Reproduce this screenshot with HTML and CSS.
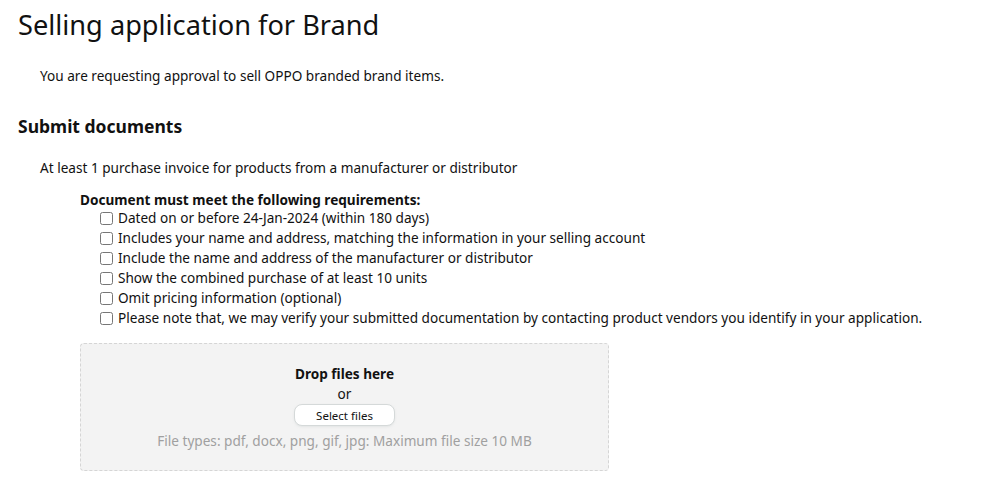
FILE: index.html
```html
<!DOCTYPE html>
<html lang="en">
<head>
    <meta charset="UTF-8">
    <meta name="viewport" content="width=device-width, initial-scale=1.0">
    <title>Selling application for Brand</title>
    <link rel="stylesheet" href="styles.css">
</head>
<body>
    <h1>Selling application for Brand</h1>

    <p class="intro">You are requesting approval to sell OPPO branded brand items.</p>

    <h2>Submit documents</h2>

    <div class="doc-section">
        <p class="doc-title">At least 1 purchase invoice for products from a manufacturer or distributor</p>

        <div class="requirements">
            <div class="req-heading">Document must meet the following requirements:</div>
            <label class="req-item"><input type="checkbox"> Dated on or before 24-Jan-2024 (within 180 days)</label>
            <label class="req-item"><input type="checkbox"> Includes your name and address, matching the information in your selling account</label>
            <label class="req-item"><input type="checkbox"> Include the name and address of the manufacturer or distributor</label>
            <label class="req-item"><input type="checkbox"> Show the combined purchase of at least 10 units</label>
            <label class="req-item"><input type="checkbox"> Omit pricing information (optional)</label>
            <label class="req-item"><input type="checkbox"> Please note that, we may verify your submitted documentation by contacting product vendors you identify in your application.</label>

            <!-- Upload area -->
            <div class="dropzone">
                <div class="drop-label">Drop files here</div>
                <div class="drop-or">or</div>
                <button class="select-btn">Select files</button>
                <div class="file-types">File types: pdf, docx, png, gif, jpg: Maximum file size 10 MB</div>
            </div>
        </div>
    </div>
</body>
</html>
```

FILE: styles.css
```css
body {
    font-family: 'Noto Sans', 'Liberation Sans', sans-serif;
    font-size: 13.6px;
    color: #111111;
    background-color: #ffffff;
    margin: 0;
    padding: 0 18px;
}

h1 {
    font-size: 27.2px;
    font-weight: normal;
    line-height: 36px;
    margin: 7px 0 0;
}

.intro {
    margin: 23px 0 0 22px;
    line-height: 20px;
}

h2 {
    font-size: 17.5px;
    font-weight: bold;
    line-height: 24px;
    margin: 28px 0 0;
}

.doc-section {
    margin-left: 22px;
}

.doc-title {
    margin: 20px 0 0;
    line-height: 20px;
}

.requirements {
    margin: 14px 0 0 40px;
}

.req-heading {
    font-weight: bold;
    line-height: 16px;
}

.req-item {
    display: flex;
    align-items: center;
    line-height: 20px;
    padding-left: 20px;
}

.req-item input {
    width: 13px;
    height: 13px;
    margin: 0 5px 0 0;
}

.dropzone {
    width: 527px;
    margin-top: 15px;
    padding: 20px 0 19px;
    border: 1px dashed #d5d5d5;
    border-radius: 4px;
    background-color: #f3f3f3;
    display: flex;
    flex-direction: column;
    align-items: center;
}

.drop-label {
    font-weight: bold;
    line-height: 20px;
}

.drop-or {
    line-height: 20px;
}

.select-btn {
    font-family: inherit;
    font-size: 11.5px;
    color: #111111;
    background-color: #ffffff;
    border: 1px solid #d5d9d9;
    border-radius: 8px;
    padding: 0;
    width: 101px;
    height: 22px;
    box-shadow: 0 1px 2px rgba(213, 217, 217, 0.5);
}

.file-types {
    color: #a0a0a0;
    line-height: 20px;
    margin-top: 5px;
}
```
